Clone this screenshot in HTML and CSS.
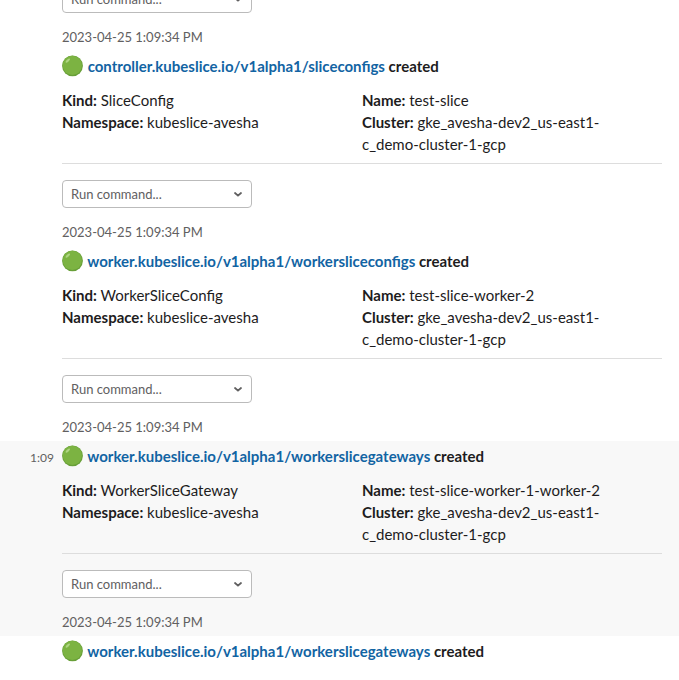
FILE: index.html
```html
<!DOCTYPE html>
<html lang="en"><head><meta charset="utf-8"><title>Messages</title><link rel="stylesheet" href="styles.css"></head>
<body><main id="feed"></main>
<script src="feed.js"></script></body></html>
```
FILE: styles.css
```css
* { box-sizing: border-box; }
body { margin: 0; background: #fff; color: #1d1c1d; font: 15px/22px Lato, "Liberation Sans", sans-serif; }
#feed { height: 680px; overflow: hidden; display: flex; flex-direction: column; }
.message { flex: none; height: 195px; display: grid; grid-template-columns: 62px 600px; align-content: start; }
.message:first-child { height: 51px; align-content: end; }
.hovered { background: #f8f8f8; }
.clock { padding: 6px 8px 0 0; font-size: 12px; color: #616061; text-align: right; }
.title { display: flex; align-items: center; height: 22px; margin-top: 4px; font-weight: 700; white-space: pre; }
.dot { width: 22px; height: 22px; flex: none; }
.link { color: #1264a3; }
.fields { display: grid; grid-template-columns: 300px 250px; margin-top: 12px; }
.divider { height: 1px; background: #ddd; margin: 8px 0 16px; }
.select { display: flex; align-items: center; justify-content: space-between; width: 190px; height: 28px; border: 1px solid #bbb; border-radius: 4px; padding: 0 8px; background: #fff; font-size: 13px; color: #616061; }
.arrow { width: 10px; height: 8px; }
.date { height: 22px; margin: 13px 0 3px; font-size: 13px; color: #616061; }
```
FILE: feed.js
```js
const dot = `<svg class="dot" viewBox="0 0 22 22"><circle cx="10.5" cy="10.8" r="10.4" fill="#689f38"/><circle cx="10.3" cy="10.4" r="9.6" fill="#7cb342"/><ellipse cx="5.8" cy="5.6" rx="2.8" ry="1.1" transform="rotate(-42 5.8 5.6)" fill="#aed581"/></svg>`;
const footer = `<div class="select"><span>Run command...</span><svg class="arrow" viewBox="0 0 10 8"><path d="M2 3l3 2.600L8 3" fill="none" stroke="#616061" stroke-width="1.8" stroke-linecap="round"/></svg></div><div class="date">2023-04-25 1:09:34 PM</div>`;
const messages = [
  ["controller.kubeslice.io/v1alpha1/sliceconfigs", "SliceConfig", "test-slice"],
  ["worker.kubeslice.io/v1alpha1/workersliceconfigs", "WorkerSliceConfig", "test-slice-worker-2"],
  ["worker.kubeslice.io/v1alpha1/workerslicegateways", "WorkerSliceGateway", "test-slice-worker-1-worker-2", "1:09"],
  ["worker.kubeslice.io/v1alpha1/workerslicegateways"]
];
document.getElementById("feed").innerHTML = `<section class="message"><div></div><div>${footer}</div></section>` + messages.map(([link, kind, name, time]) => `
<section class="message ${time ? "hovered" : ""}"><div class="clock">${time || ""}</div><div>
<div class="title">${dot}<span><span class="link"> ${link}</span> created</span></div>
${kind ? `<div class="fields"><div><b>Kind:</b> ${kind}<br><b>Namespace:</b> kubeslice-avesha</div><div><b>Name:</b> ${name}<br><b>Cluster:</b> gke_avesha-dev2_us-east1-<br>c_demo-cluster-1-gcp</div></div><div class="divider"></div>${footer}` : ""}
</div></section>`).join("");
```
